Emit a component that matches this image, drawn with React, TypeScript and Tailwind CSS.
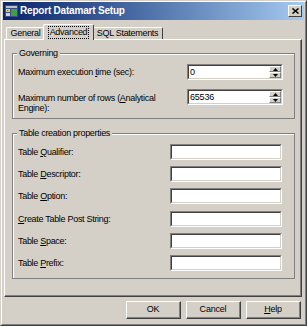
import React from 'react';

const font = { fontFamily: '"Liberation Sans", Arial, sans-serif' };

// Sunken edit box, Win2000 style
const Edit: React.FC<{ value?: string; spin?: boolean; className?: string }> = ({ value, spin, className }) => (
    <div className={`h-[16px] shrink-0 flex border-t border-l border-t-[#808080] border-l-[#808080] border-b border-r border-b-white border-r-white ${className || ''}`}>
        <div className="flex-1 flex border-t border-l border-t-[#404040] border-l-[#404040] border-b border-r border-b-[#d4d0c8] border-r-[#d4d0c8] bg-white">
            <span className="flex-1 pl-[1px] leading-[13px] text-[9px] tracking-[-0.2px] text-black">{value}</span>
            {spin && (
                <div className="w-[12px] flex flex-col">
                    <SpinHalf up />
                    <SpinHalf />
                </div>
            )}
        </div>
    </div>
);

const SpinHalf: React.FC<{ up?: boolean }> = ({ up }) => (
    <div className="flex-1 flex items-center justify-center bg-[#d4d0c8] border-t border-l border-t-white border-l-white border-b border-r border-b-[#808080] border-r-[#808080]">
        <svg width="5" height="3" viewBox="0 0 5 3">
            {up ? <path d="M2.5 0 L5 3 L0 3 Z" fill="#000" /> : <path d="M0 0 L5 0 L2.5 3 Z" fill="#000" />}
        </svg>
    </div>
);

const Button: React.FC<{ children: React.ReactNode }> = ({ children }) => (
    <div className="w-[55px] h-[18px] border-t border-l border-t-white border-l-white border-b border-r border-b-[#404040] border-r-[#404040]">
        <div className="h-full flex items-center justify-center border-b border-r border-b-[#808080] border-r-[#808080] text-[9px] tracking-[-0.2px] text-black">
            {children}
        </div>
    </div>
);

// Etched group box
const Group: React.FC<{ title: string; className?: string; children: React.ReactNode }> = ({ title, className, children }) => (
    <div className={`relative border border-[#808080] ${className || ''}`}>
        <div className="absolute inset-0 border-t border-l border-white pointer-events-none" />
        <span className="absolute -top-[6px] left-[4px] px-[2px] bg-[#d4d0c8] text-[9px] tracking-[-0.3px] leading-[11px] text-black">{title}</span>
        {children}
    </div>
);

const tableRows: { label: React.ReactNode }[] = [
    { label: <>Table <u>Q</u>ualifier:</> },
    { label: <>Table <u>D</u>escriptor:</> },
    { label: <>Table <u>O</u>ption:</> },
    { label: <><u>C</u>reate Table Post String:</> },
    { label: <>Table <u>S</u>pace:</> },
    { label: <>Table <u>P</u>refix:</> },
];

const App: React.FC = () => {
    return (
        <div style={font} className="w-[307px] h-[326px] bg-[#d4d0c8] border-t border-l border-t-[#d4d0c8] border-l-[#d4d0c8] border-b border-r border-b-[#404040] border-r-[#404040] overflow-hidden">
            <div className="h-full flex flex-col border-t border-l border-t-white border-l-white border-b border-r border-b-[#808080] border-r-[#808080] px-[1px]">
                {/* Title bar */}
                <div className="h-[18px] flex items-center bg-gradient-to-r from-[#0a246a] to-[#a6caf0] pl-[2px] pr-[2px]">
                    <svg width="13" height="12" viewBox="0 0 13 12" className="shrink-0">
                        <rect x="0" y="0" width="13" height="12" fill="#3a4a8a" />
                        <rect x="1" y="1" width="11" height="2" fill="#c0c0c0" />
                        <rect x="1" y="4" width="4" height="3" fill="#e0e040" />
                        <rect x="6" y="4" width="6" height="7" fill="#40a040" />
                        <rect x="1" y="8" width="4" height="3" fill="#d0d0d0" />
                        <path d="M2 5 L4 6 L2 6 Z" fill="#404080" />
                    </svg>
                    <span className="ml-[2px] text-[10px] tracking-[-0.2px] font-bold text-white leading-none">Report Datamart Setup</span>
                    <div className="ml-auto w-[14px] h-[12px] bg-[#d4d0c8] border-t border-l border-t-white border-l-white border-b border-r border-b-[#404040] border-r-[#404040] flex items-center justify-center">
                        <svg width="7" height="6" viewBox="0 0 7 6">
                            <path d="M0.5 0.5 L6.5 5.5 M6.5 0.5 L0.5 5.5" stroke="#000" strokeWidth="1.5" />
                        </svg>
                    </div>
                </div>

                {/* Tabs */}
                <div className="mt-[3px] pl-[3px] flex items-end h-[16px] relative z-10">
                    <div className="w-[39px] h-[12px] flex items-center justify-center border-t border-l border-t-white border-l-white border-r border-r-[#404040] rounded-t-[2px] text-[9px] tracking-[-0.3px] text-black">General</div>
                    <div className="w-[51px] h-[16px] -mb-[1px] -ml-[2px] flex items-center justify-center bg-[#d4d0c8] border-t border-l border-t-white border-l-white border-r border-r-[#404040] rounded-t-[2px] text-[9px] tracking-[-0.3px] text-black z-10">
                        <span className="px-[1px] outline outline-1 outline-dotted outline-black leading-[11px]">Advanced</span>
                    </div>
                    <div className="w-[70px] h-[12px] -ml-[1px] flex items-center justify-center border-t border-t-white border-r border-r-[#404040] rounded-t-[2px] text-[9px] tracking-[-0.3px] text-black">SQL Statements</div>
                </div>

                {/* Tab panel */}
                <div className="ml-[1px] mr-[2px] h-[258px] border-t border-l border-t-white border-l-white border-b border-r border-b-[#404040] border-r-[#404040]">
                    <div className="h-full border-b border-r border-b-[#808080] border-r-[#808080] pl-[7px] pr-[5px] pt-[13px] flex flex-col gap-[14px]">
                        <Group title="Governing" className="h-[66px]">
                            <div className="pl-[5px] pr-[11px] pt-[10px] flex flex-col gap-[9px] text-[9px] tracking-[-0.3px] text-black leading-[10px]">
                                <div className="flex items-center">
                                    <span className="flex-1">Maximum execution <u>t</u>ime (sec):</span>
                                    <Edit value="0" spin className="w-[96px]" />
                                </div>
                                <div className="flex items-start">
                                    <span className="flex-1 pt-[4px]">Maximum number of rows (<u>A</u>nalytical<br />Engine):</span>
                                    <Edit value="65536" spin className="w-[96px]" />
                                </div>
                            </div>
                        </Group>
                        <Group title="Table creation properties" className="h-[146px]">
                            <div className="pl-[5px] pr-[12px] pt-[10px] flex flex-col gap-[6.2px] text-[9px] tracking-[-0.3px] text-black leading-[10px]">
                                {tableRows.map((r, i) => (
                                    <div key={i} className="flex items-center">
                                        <span className="flex-1">{r.label}</span>
                                        <Edit className="w-[112px]" />
                                    </div>
                                ))}
                            </div>
                        </Group>
                    </div>
                </div>

                {/* Buttons */}
                <div className="mt-[4px] flex justify-end gap-[5px] pr-[3px]">
                    <Button>OK</Button>
                    <Button>Cancel</Button>
                    <Button><u>H</u>elp</Button>
                </div>
            </div>
        </div>
    );
};

export default App;
